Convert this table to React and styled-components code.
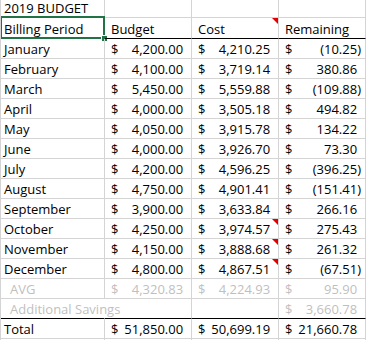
import styled, { createGlobalStyle, css } from "styled-components";

const GlobalStyle = createGlobalStyle`
  html, body {
    margin: 0;
    padding: 0;
    background: #ffffff;
    overflow: hidden;
  }
  body {
    font-family: "Open Sans", "Liberation Sans", sans-serif;
    font-size: 13px;
    color: #000000;
  }
`;

const months = [
  ["January", "4,200.00", "4,210.25", "(10.25)"],
  ["February", "4,100.00", "3,719.14", "380.86"],
  ["March", "5,450.00", "5,559.88", "(109.88)"],
  ["April", "4,000.00", "3,505.18", "494.82"],
  ["May", "4,050.00", "3,915.78", "134.22"],
  ["June", "4,000.00", "3,926.70", "73.30"],
  ["July", "4,200.00", "4,596.25", "(396.25)"],
  ["August", "4,750.00", "4,901.41", "(151.41)"],
  ["September", "3,900.00", "3,633.84", "266.16"],
  ["October", "4,250.00", "3,974.57", "275.43", true],
  ["November", "4,150.00", "3,888.68", "261.32", true],
  ["December", "4,800.00", "4,867.51", "(67.51)", true],
];

const Money = ({ value }) => {
  if (value == null) return null;
  const negative = value.startsWith("(");
  return (
    <MoneyWrap>
      <span>$</span>
      <span>
        {value}
        {!negative && <Paren>)</Paren>}
      </span>
    </MoneyWrap>
  );
};

const App = () => {
  return (
    <>
      <GlobalStyle />
      <Sheet>
        <Row $height={18}>
          <Cell>2019 BUDGET</Cell>
          <Cell />
          <Cell />
          <Cell />
        </Row>
        <Row $height={21}>
          <Cell>
            Billing Period
            <Selection>
              <Handle />
            </Selection>
          </Cell>
          <HeadCell>Budget</HeadCell>
          <HeadCell>
            Cost
            <Flag />
          </HeadCell>
          <HeadCell>Remaining</HeadCell>
        </Row>
        {months.map(([name, budget, cost, remaining, flagged]) => (
          <Row key={name} $height={20}>
            <Cell>{name}</Cell>
            <Cell>
              <Money value={budget} />
            </Cell>
            <Cell>
              <Money value={cost} />
              {flagged && <Flag />}
            </Cell>
            <Cell>
              <Money value={remaining} />
            </Cell>
          </Row>
        ))}
        <Row $height={20} $muted>
          <Cell $indent>AVG</Cell>
          <Cell>
            <Money value="4,320.83" />
          </Cell>
          <Cell>
            <Money value="4,224.93" />
          </Cell>
          <Cell>
            <Money value="95.90" />
          </Cell>
        </Row>
        <Row $height={20} $muted $dark>
          <Cell $indent $overflow>
            <Spill>Additional Savings</Spill>
          </Cell>
          <Cell />
          <Cell />
          <Cell>
            <Money value="3,660.78" />
          </Cell>
        </Row>
        <Row $height={20}>
          <Cell>Total</Cell>
          <Cell>
            <Money value="51,850.00" />
          </Cell>
          <Cell>
            <Money value="50,699.19" />
          </Cell>
          <Cell>
            <Money value="21,660.78" />
          </Cell>
        </Row>
        <Row $height={20}>
          <Cell />
          <Cell />
          <Cell />
          <Cell />
        </Row>
      </Sheet>
    </>
  );
};

export default App;

const Sheet = styled.div`
  display: flex;
  flex-direction: column;
  width: 366px;
  height: 340px;
  border-left: 1px solid #d4d4d4;
  box-sizing: border-box;
  overflow: hidden;
`;

const Row = styled.div`
  display: grid;
  grid-template-columns: 104px 87px 87px 87px;
  height: ${(p) => p.$height}px;
  flex-shrink: 0;
  color: ${(p) => (p.$muted ? "#bfbfbf" : "#000000")};
  & > div {
    border-bottom: 1px solid ${(p) => (p.$dark ? "#000000" : "#d4d4d4")};
  }
`;

const Cell = styled.div`
  position: relative;
  box-sizing: border-box;
  display: flex;
  align-items: flex-end;
  min-width: 0;
  padding: 0 0 1px 3px;
  line-height: 16px;
  white-space: nowrap;
  border-right: 1px solid #d4d4d4;
  ${(p) => p.$indent && css`padding-left: 9px;`}
  ${(p) =>
    p.$overflow &&
    css`
      overflow: visible;
      border-right-color: transparent;
      z-index: 1;
    `}
`;

const Spill = styled.span`
  flex-shrink: 0;
  white-space: nowrap;
`;

const HeadCell = styled(Cell)`
  padding-left: 6px;
  border-bottom-color: #000000 !important;
`;

const MoneyWrap = styled.div`
  flex: 1;
  display: flex;
  justify-content: space-between;
  padding: 0 4px 0 3px;
`;

const Paren = styled.span`
  visibility: hidden;
`;

const Flag = styled.span`
  position: absolute;
  top: 0;
  right: 0;
  width: 6px;
  height: 6px;
  background: #e00000;
  clip-path: polygon(0 0, 100% 0, 100% 100%);
`;

const Selection = styled.div`
  position: absolute;
  top: -2px;
  left: -1px;
  right: -1px;
  bottom: -1px;
  border: 2px solid #217346;
  pointer-events: none;
`;

const Handle = styled.div`
  position: absolute;
  right: -5px;
  bottom: -5px;
  width: 5px;
  height: 5px;
  background: #217346;
  border: 1px solid #ffffff;
`;
